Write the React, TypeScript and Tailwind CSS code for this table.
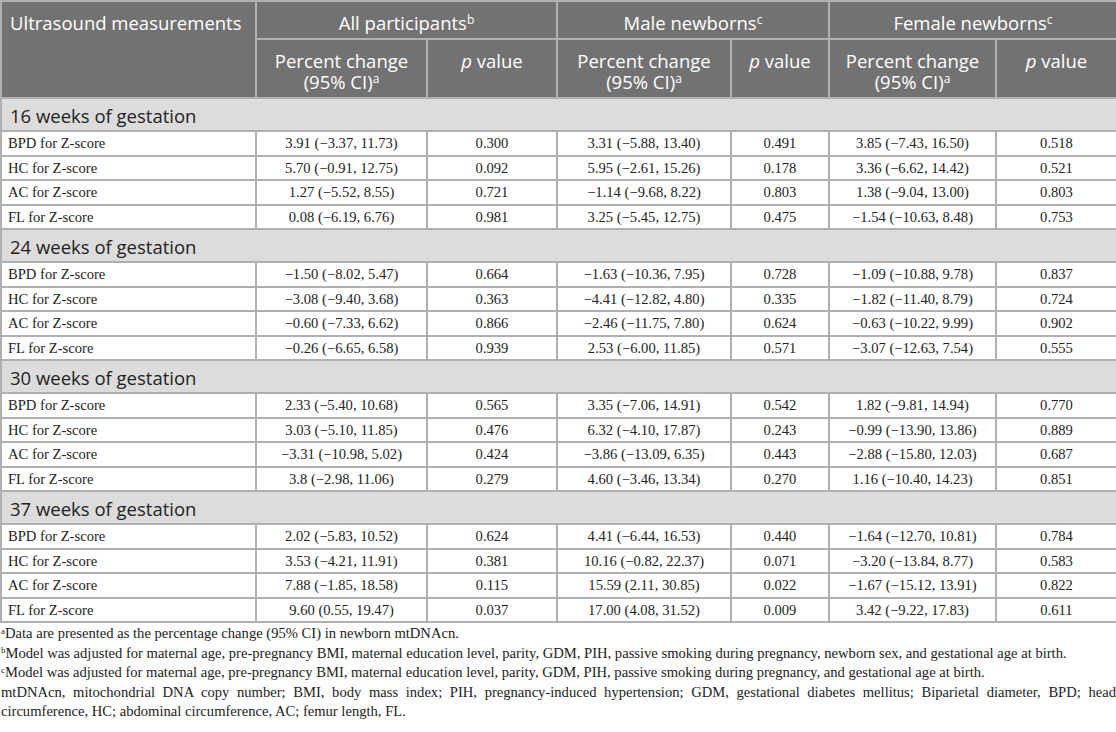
import React from 'react';

type Row = [string, string, string, string, string, string, string];

const sections: { title: string; rows: Row[] }[] = [
  {
    title: '16 weeks of gestation',
    rows: [
      ['BPD for Z-score', '3.91 (−3.37, 11.73)', '0.300', '3.31 (−5.88, 13.40)', '0.491', '3.85 (−7.43, 16.50)', '0.518'],
      ['HC for Z-score', '5.70 (−0.91, 12.75)', '0.092', '5.95 (−2.61, 15.26)', '0.178', '3.36 (−6.62, 14.42)', '0.521'],
      ['AC for Z-score', '1.27 (−5.52, 8.55)', '0.721', '−1.14 (−9.68, 8.22)', '0.803', '1.38 (−9.04, 13.00)', '0.803'],
      ['FL for Z-score', '0.08 (−6.19, 6.76)', '0.981', '3.25 (−5.45, 12.75)', '0.475', '−1.54 (−10.63, 8.48)', '0.753'],
    ],
  },
  {
    title: '24 weeks of gestation',
    rows: [
      ['BPD for Z-score', '−1.50 (−8.02, 5.47)', '0.664', '−1.63 (−10.36, 7.95)', '0.728', '−1.09 (−10.88, 9.78)', '0.837'],
      ['HC for Z-score', '−3.08 (−9.40, 3.68)', '0.363', '−4.41 (−12.82, 4.80)', '0.335', '−1.82 (−11.40, 8.79)', '0.724'],
      ['AC for Z-score', '−0.60 (−7.33, 6.62)', '0.866', '−2.46 (−11.75, 7.80)', '0.624', '−0.63 (−10.22, 9.99)', '0.902'],
      ['FL for Z-score', '−0.26 (−6.65, 6.58)', '0.939', '2.53 (−6.00, 11.85)', '0.571', '−3.07 (−12.63, 7.54)', '0.555'],
    ],
  },
  {
    title: '30 weeks of gestation',
    rows: [
      ['BPD for Z-score', '2.33 (−5.40, 10.68)', '0.565', '3.35 (−7.06, 14.91)', '0.542', '1.82 (−9.81, 14.94)', '0.770'],
      ['HC for Z-score', '3.03 (−5.10, 11.85)', '0.476', '6.32 (−4.10, 17.87)', '0.243', '−0.99 (−13.90, 13.86)', '0.889'],
      ['AC for Z-score', '−3.31 (−10.98, 5.02)', '0.424', '−3.86 (−13.09, 6.35)', '0.443', '−2.88 (−15.80, 12.03)', '0.687'],
      ['FL for Z-score', '3.8 (−2.98, 11.06)', '0.279', '4.60 (−3.46, 13.34)', '0.270', '1.16 (−10.40, 14.23)', '0.851'],
    ],
  },
  {
    title: '37 weeks of gestation',
    rows: [
      ['BPD for Z-score', '2.02 (−5.83, 10.52)', '0.624', '4.41 (−6.44, 16.53)', '0.440', '−1.64 (−12.70, 10.81)', '0.784'],
      ['HC for Z-score', '3.53 (−4.21, 11.91)', '0.381', '10.16 (−0.82, 22.37)', '0.071', '−3.20 (−13.84, 8.77)', '0.583'],
      ['AC for Z-score', '7.88 (−1.85, 18.58)', '0.115', '15.59 (2.11, 30.85)', '0.022', '−1.67 (−15.12, 13.91)', '0.822'],
      ['FL for Z-score', '9.60 (0.55, 19.47)', '0.037', '17.00 (4.08, 31.52)', '0.009', '3.42 (−9.22, 17.83)', '0.611'],
    ],
  },
];

const sans = "font-['Open_Sans',sans-serif]";
const serif = "font-['Liberation_Serif',serif]";
const cell = 'border-2 border-[#b0b0b0]';

function Sup({ c }: { c: string }) {
  return <sup className="text-[12px]">{c}</sup>;
}

function PctHead() {
  return (
    <th className={`${cell} font-normal leading-[21px] px-1 align-top pt-[10px]`}>
      Percent change
      <br />
      (95% CI)
      <Sup c="a" />
    </th>
  );
}

function PHead() {
  return (
    <th className={`${cell} font-normal leading-[21px] px-1 align-top pt-[10px]`}>
      <i>p</i> value
    </th>
  );
}

export default function App() {
  return (
    <div className="w-[1116px] h-[732px] bg-white overflow-hidden text-[#222]">
      <table className="w-[1116px] border-collapse table-fixed">
        <colgroup>
          <col className="w-[255px]" />
          <col className="w-[171px]" />
          <col className="w-[130px]" />
          <col className="w-[174px]" />
          <col className="w-[98px]" />
          <col className="w-[167px]" />
          <col className="w-[121px]" />
        </colgroup>
        <thead className={`${sans} text-[18.5px] text-white bg-[#727272]`}>
          <tr className="h-[38px]">
            <th rowSpan={2} className={`${cell} font-normal text-left align-top pl-2 pt-[10px] leading-[22px]`}>
              Ultrasound measurements
            </th>
            <th colSpan={2} className={`${cell} font-normal align-top pt-[10px] leading-[22px]`}>
              All participants
              <Sup c="b" />
            </th>
            <th colSpan={2} className={`${cell} font-normal align-top pt-[10px] leading-[22px]`}>
              Male newborns
              <Sup c="c" />
            </th>
            <th colSpan={2} className={`${cell} font-normal align-top pt-[10px] leading-[22px]`}>
              Female newborns
              <Sup c="c" />
            </th>
          </tr>
          <tr className="h-[59px]">
            <PctHead />
            <PHead />
            <PctHead />
            <PHead />
            <PctHead />
            <PHead />
          </tr>
        </thead>
        <tbody>
          {sections.map((s) => (
            <React.Fragment key={s.title}>
              <tr className="h-[33px] bg-[#dcdcdc]">
                <td colSpan={7} className={`${sans} text-[18.5px] ${cell} pl-2 pt-[2px]`}>
                  {s.title}
                </td>
              </tr>
              {s.rows.map((r) => (
                <tr key={r[0]} className={`h-[24.5px] ${serif} text-[14.6px]`}>
                  {r.map((c, i) => (
                    <td
                      key={i}
                      className={`${cell} leading-[20px] py-0 ${i === 0 ? 'text-left pl-1.5' : 'text-center'}`}
                    >
                      {c}
                    </td>
                  ))}
                </tr>
              ))}
            </React.Fragment>
          ))}
        </tbody>
      </table>
      <div className={`${serif} text-[14.6px] leading-[19.5px] text-[#222] mt-[1px] pl-[1px] text-justify`}>
        <p>
          <sup className="text-[9px]">a</sup>Data are presented as the percentage change (95% CI) in newborn mtDNAcn.
        </p>
        <p>
          <sup className="text-[9px]">b</sup>Model was adjusted for maternal age, pre-pregnancy BMI, maternal education level, parity, GDM, PIH, passive smoking during pregnancy, newborn sex, and gestational age at birth.
        </p>
        <p>
          <sup className="text-[9px]">c</sup>Model was adjusted for maternal age, pre-pregnancy BMI, maternal education level, parity, GDM, PIH, passive smoking during pregnancy, and gestational age at birth.
        </p>
        <p>
          mtDNAcn, mitochondrial DNA copy number; BMI, body mass index; PIH, pregnancy-induced hypertension; GDM, gestational diabetes mellitus; Biparietal diameter, BPD; head circumference, HC; abdominal circumference, AC; femur length, FL.
        </p>
      </div>
    </div>
  );
}
